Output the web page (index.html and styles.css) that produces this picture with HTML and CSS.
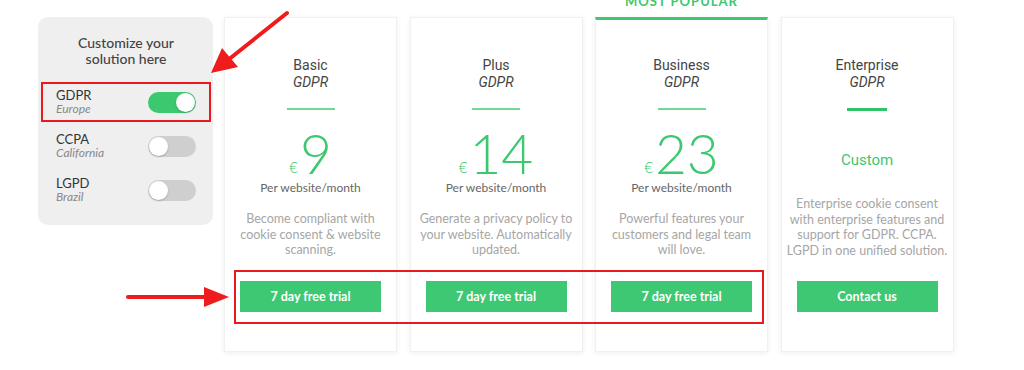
FILE: index.html
```html
<!DOCTYPE html>
<html lang="en">
<head>
    <meta charset="UTF-8">
    <title>Pricing - Cookie consent</title>
    <link rel="stylesheet" href="styles.css">
</head>
<body>
    <div class="page">
        <aside class="customizer">
            <h2>Customize your<br>solution here</h2>
            <div class="law-row">
                <div class="law-name">GDPR<span>Europe</span></div>
                <div class="switch on"><div class="knob"></div></div>
            </div>
            <div class="law-row">
                <div class="law-name">CCPA<span>California</span></div>
                <div class="switch"><div class="knob"></div></div>
            </div>
            <div class="law-row">
                <div class="law-name">LGPD<span>Brazil</span></div>
                <div class="switch"><div class="knob"></div></div>
            </div>
        </aside>

        <div class="plans">
            <div class="plan">
                <h3>Basic<em>GDPR</em></h3>
                <div class="divider"></div>
                <div class="price"><span class="currency">€</span>9</div>
                <div class="period">Per website/month</div>
                <p class="desc">Become compliant with cookie consent &amp; website scanning.</p>
                <a class="btn" href="#">7 day free trial</a>
            </div>
            <div class="plan">
                <h3>Plus<em>GDPR</em></h3>
                <div class="divider"></div>
                <div class="price"><span class="currency">€</span>14</div>
                <div class="period">Per website/month</div>
                <p class="desc">Generate a privacy policy to your website. Automatically updated.</p>
                <a class="btn" href="#">7 day free trial</a>
            </div>
            <div class="plan popular">
                <div class="popular-label">Most popular</div>
                <h3>Business<em>GDPR</em></h3>
                <div class="divider"></div>
                <div class="price"><span class="currency">€</span>23</div>
                <div class="period">Per website/month</div>
                <p class="desc">Powerful features your customers and legal team will love.</p>
                <a class="btn" href="#">7 day free trial</a>
            </div>
            <div class="plan enterprise">
                <h3>Enterprise<em>GDPR</em></h3>
                <div class="divider"></div>
                <div class="custom">Custom</div>
                <p class="desc">Enterprise cookie consent with enterprise features and support for GDPR. CCPA. LGPD in one unified solution.</p>
                <a class="btn" href="#">Contact us</a>
            </div>
        </div>

        <!-- annotations -->
        <div class="mark mark-gdpr"></div>
        <div class="mark mark-buttons"></div>
        <svg class="arrows" width="1024" height="370" viewBox="0 0 1024 370">
            <line x1="287" y1="13" x2="228" y2="60" stroke="#ee1c1c" stroke-width="4" stroke-linecap="round"/>
            <polygon points="211,73 222,48 238,67" fill="#ee1c1c"/>
            <line x1="128" y1="297" x2="206" y2="297" stroke="#ee1c1c" stroke-width="4" stroke-linecap="round"/>
            <polygon points="229,297 204,287 204,307" fill="#ee1c1c"/>
        </svg>
    </div>
</body>
</html>
```

FILE: styles.css
```css
* {
    box-sizing: border-box;
}

html, body {
    margin: 0;
    padding: 0;
    background-color: #fff;
    font-family: 'Lato', 'Open Sans', sans-serif;
    color: #444;
}

.page {
    position: relative;
    display: flex;
    align-items: flex-start;
    gap: 11px;
    padding: 17px 0 0 38px;
    width: 1024px;
    height: 370px;
    overflow: hidden;
}

/* left customizer */
.customizer {
    width: 175px;
    height: 208px;
    background-color: #efefef;
    border-radius: 10px;
    padding: 18px 17px 0 18px;
}

.customizer h2 {
    margin: 0 0 14px;
    text-align: center;
    font-size: 14px;
    line-height: 16px;
    font-weight: 500;
    color: #444;
}

.law-row {
    display: flex;
    align-items: center;
    justify-content: space-between;
    height: 44px;
    padding-bottom: 2px;
}

.law-name {
    display: flex;
    flex-direction: column;
    font-size: 13px;
    line-height: 13px;
    color: #333;
}

.law-name span {
    font-size: 12px;
    font-style: italic;
    color: #888;
}

.switch {
    position: relative;
    width: 48px;
    height: 21px;
    border-radius: 11px;
    background-color: #cfcfcf;
}

.switch.on {
    background-color: #3cc86e;
}

.knob {
    position: absolute;
    top: 1px;
    left: 1px;
    width: 19px;
    height: 19px;
    border-radius: 50%;
    background-color: #fff;
    box-shadow: 0 1px 2px rgba(0, 0, 0, 0.2);
}

.switch.on .knob {
    left: 28px;
}

/* pricing cards */
.plans {
    display: flex;
    gap: 12.5px;
}

.plan {
    position: relative;
    display: flex;
    flex-direction: column;
    align-items: center;
    width: 173px;
    height: 335px;
    padding: 39px 5px 39px;
    background-color: #fff;
    border: 1px solid #f0f0f0;
    box-shadow: 0 1px 5px rgba(0, 0, 0, 0.07);
    text-align: center;
}

.plan.popular {
    border-top: 3px solid #3cc86e;
    padding-top: 37px;
}

.popular-label {
    position: absolute;
    top: -29px;
    left: 0;
    right: 0;
    font-size: 13px;
    line-height: 20px;
    font-weight: 700;
    letter-spacing: 1px;
    text-transform: uppercase;
    color: #3cc86e;
}

.plan h3 {
    display: flex;
    flex-direction: column;
    margin: 0;
    font-family: 'Roboto', sans-serif;
    font-size: 14px;
    line-height: 17px;
    font-weight: 400;
    color: #444;
}

.plan h3 em {
    font-weight: 400;
}

.divider {
    width: 48px;
    height: 2px;
    margin-top: 17px;
    background-color: #6fd896;
}

.enterprise .divider {
    width: 40px;
    height: 3px;
    background-color: #2fc465;
}

.price {
    margin-top: 15px;
    height: 56px;
    font-size: 55px;
    line-height: 56px;
    font-weight: 300;
    color: #3cc86e;
}

.currency {
    font-size: 15px;
    line-height: 1;
    margin-right: 2px;
    vertical-align: 1px;
}

.period {
    font-size: 12px;
    line-height: 14px;
    color: #666;
}

.custom {
    margin-top: 40px;
    font-family: 'Roboto', sans-serif;
    font-size: 15px;
    line-height: 18px;
    color: #3cc86e;
}

.desc {
    margin: 16px 0 0;
    padding: 0 4px;
    font-size: 12.5px;
    line-height: 15.5px;
    color: #a6a6a6;
}

.enterprise .desc {
    margin-top: 27px;
    padding: 0;
}

.btn {
    display: block;
    width: 141px;
    height: 31px;
    margin-top: auto;
    line-height: 31px;
    background-color: #3ec873;
    color: #fff;
    font-size: 12.5px;
    font-weight: 700;
    text-decoration: none;
}

/* red annotations */
.mark {
    position: absolute;
    border: 2px solid #e81a1f;
}

.mark-gdpr {
    left: 41px;
    top: 82px;
    width: 170px;
    height: 40px;
}

.mark-buttons {
    left: 234px;
    top: 270px;
    width: 530px;
    height: 54px;
}

.arrows {
    position: absolute;
    left: 0;
    top: 0;
    pointer-events: none;
}
```
